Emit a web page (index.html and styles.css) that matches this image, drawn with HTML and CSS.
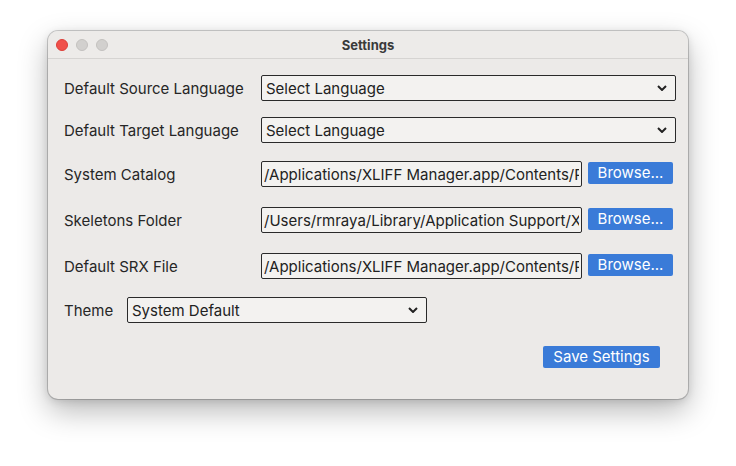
FILE: index.html
```html
<!DOCTYPE html>
<html>
<head>
<meta charset="utf-8">
<title>Settings</title>
<link rel="stylesheet" href="styles.css">
</head>
<body>
<div class="window">
  <div class="titlebar">
    <div class="lights">
      <span class="light red"></span>
      <span class="light gray"></span>
      <span class="light gray"></span>
    </div>
    <div class="title">Settings</div>
  </div>
  <div class="content">
    <div class="row row-lang">
      <label class="label wide">Default Source Language</label>
      <div class="select full"><span>Select Language</span><svg class="chev" viewBox="0 0 10 6" width="10" height="6"><path d="M1 1 L5 5 L9 1" fill="none" stroke="#222" stroke-width="2"/></svg></div>
    </div>
    <div class="row row-lang second">
      <label class="label wide">Default Target Language</label>
      <div class="select full"><span>Select Language</span><svg class="chev" viewBox="0 0 10 6" width="10" height="6"><path d="M1 1 L5 5 L9 1" fill="none" stroke="#222" stroke-width="2"/></svg></div>
    </div>
    <div class="row row-file first-file">
      <label class="label wide">System Catalog</label>
      <input class="input" type="text" readonly value="/Applications/XLIFF Manager.app/Contents/Resources/catalog/catalog.xml">
      <button class="btn browse">Browse...</button>
    </div>
    <div class="row row-file">
      <label class="label wide">Skeletons Folder</label>
      <input class="input" type="text" readonly value="/Users/rmraya/Library/Application Support/XLIFFManager/skeletons">
      <button class="btn browse">Browse...</button>
    </div>
    <div class="row row-file">
      <label class="label wide">Default SRX File</label>
      <input class="input" type="text" readonly value="/Applications/XLIFF Manager.app/Contents/Resources/srx/default.srx">
      <button class="btn browse">Browse...</button>
    </div>
    <div class="row row-theme">
      <label class="label">Theme</label>
      <div class="select theme"><span>System Default</span><svg class="chev" viewBox="0 0 10 6" width="10" height="6"><path d="M1 1 L5 5 L9 1" fill="none" stroke="#222" stroke-width="2"/></svg></div>
    </div>
    <div class="actions">
      <button class="btn save">Save Settings</button>
    </div>
  </div>
</div>
</body>
</html>
```
FILE: styles.css
```css
html, body {
  margin: 0;
  padding: 0;
  background: #ffffff;
}
body {
  width: 736px;
  height: 466px;
  padding: 31px 0 0 48px;
  box-sizing: border-box;
  font-family: Inter, "Noto Sans", "Liberation Sans", sans-serif;
  color: #262626;
}
.window {
  width: 640px;
  height: 368px;
  background: #ECEAE8;
  border-radius: 10px;
  box-shadow: 0 0 0 1px rgba(0,0,0,0.18), 0 12px 30px rgba(0,0,0,0.28), 0 2px 8px rgba(0,0,0,0.12);
  overflow: hidden;
  box-sizing: border-box;
}
.titlebar {
  height: 27px;
  border-bottom: 1px solid #D6D4D2;
  background: #EDEBE9;
  display: flex;
  align-items: center;
  position: relative;
}
.lights {
  display: flex;
  gap: 8px;
  padding-left: 8px;
  position: absolute;
  left: 0;
  top: 8px;
}
.light {
  width: 12px;
  height: 12px;
  border-radius: 50%;
  box-sizing: border-box;
}
.light.red {
  background: #F0504A;
  border: 1px solid #DC3E38;
}
.light.gray {
  background: #D2D0CE;
  border: 1px solid #C3C1BF;
}
.title {
  flex: 1;
  text-align: center;
  font-size: 13px;
  font-weight: 700;
  color: #3a3a3a;
  padding-top: 1px;
}
.content {
  padding: 16px 12px 0 16px;
  display: flex;
  flex-direction: column;
}
.row {
  display: flex;
  align-items: center;
  height: 26px;
}
.row.second { margin-top: 16px; }
.row.first-file { margin-top: 18px; }
.row-file + .row-file { margin-top: 20px; }
.row-theme { margin-top: 18px; }
.label {
  font-size: 15px;
  white-space: nowrap;
}
.label.wide {
  width: 197px;
  flex: none;
}
.row-theme .label {
  width: 63px;
  flex: none;
}
.select {
  height: 26px;
  box-sizing: border-box;
  border: 1px solid #2a2a2a;
  border-radius: 2px;
  background: #F3F2F0;
  display: flex;
  align-items: center;
  padding: 0 8px 0 4px;
  font-size: 15px;
  color: #222;
}
.select span { flex: 1; white-space: nowrap; }
.select.full { width: 415px; }
.select.theme { width: 300px; }
.chev { flex: none; }
.input {
  width: 321px;
  height: 26px;
  box-sizing: border-box;
  border: 1px solid #2a2a2a;
  border-radius: 2px;
  background: #F3F2F0;
  padding: 0 2px;
  margin: 0;
  font-family: inherit;
  font-size: 15px;
  color: #222;
  flex: none;
  outline: none;
}
.btn {
  border: none;
  background: #3A7BD8;
  color: #ffffff;
  font-family: inherit;
  font-size: 15px;
  border-radius: 2px;
  height: 22px;
  padding: 0;
  line-height: 22px;
  white-space: nowrap;
}
.browse {
  width: 85px;
  margin-left: 6px;
  margin-top: -2px;
  flex: none;
}
.actions {
  display: flex;
  justify-content: flex-end;
  padding-right: 16px;
  margin-top: 23px;
}
.save {
  width: 117px;
}
```
